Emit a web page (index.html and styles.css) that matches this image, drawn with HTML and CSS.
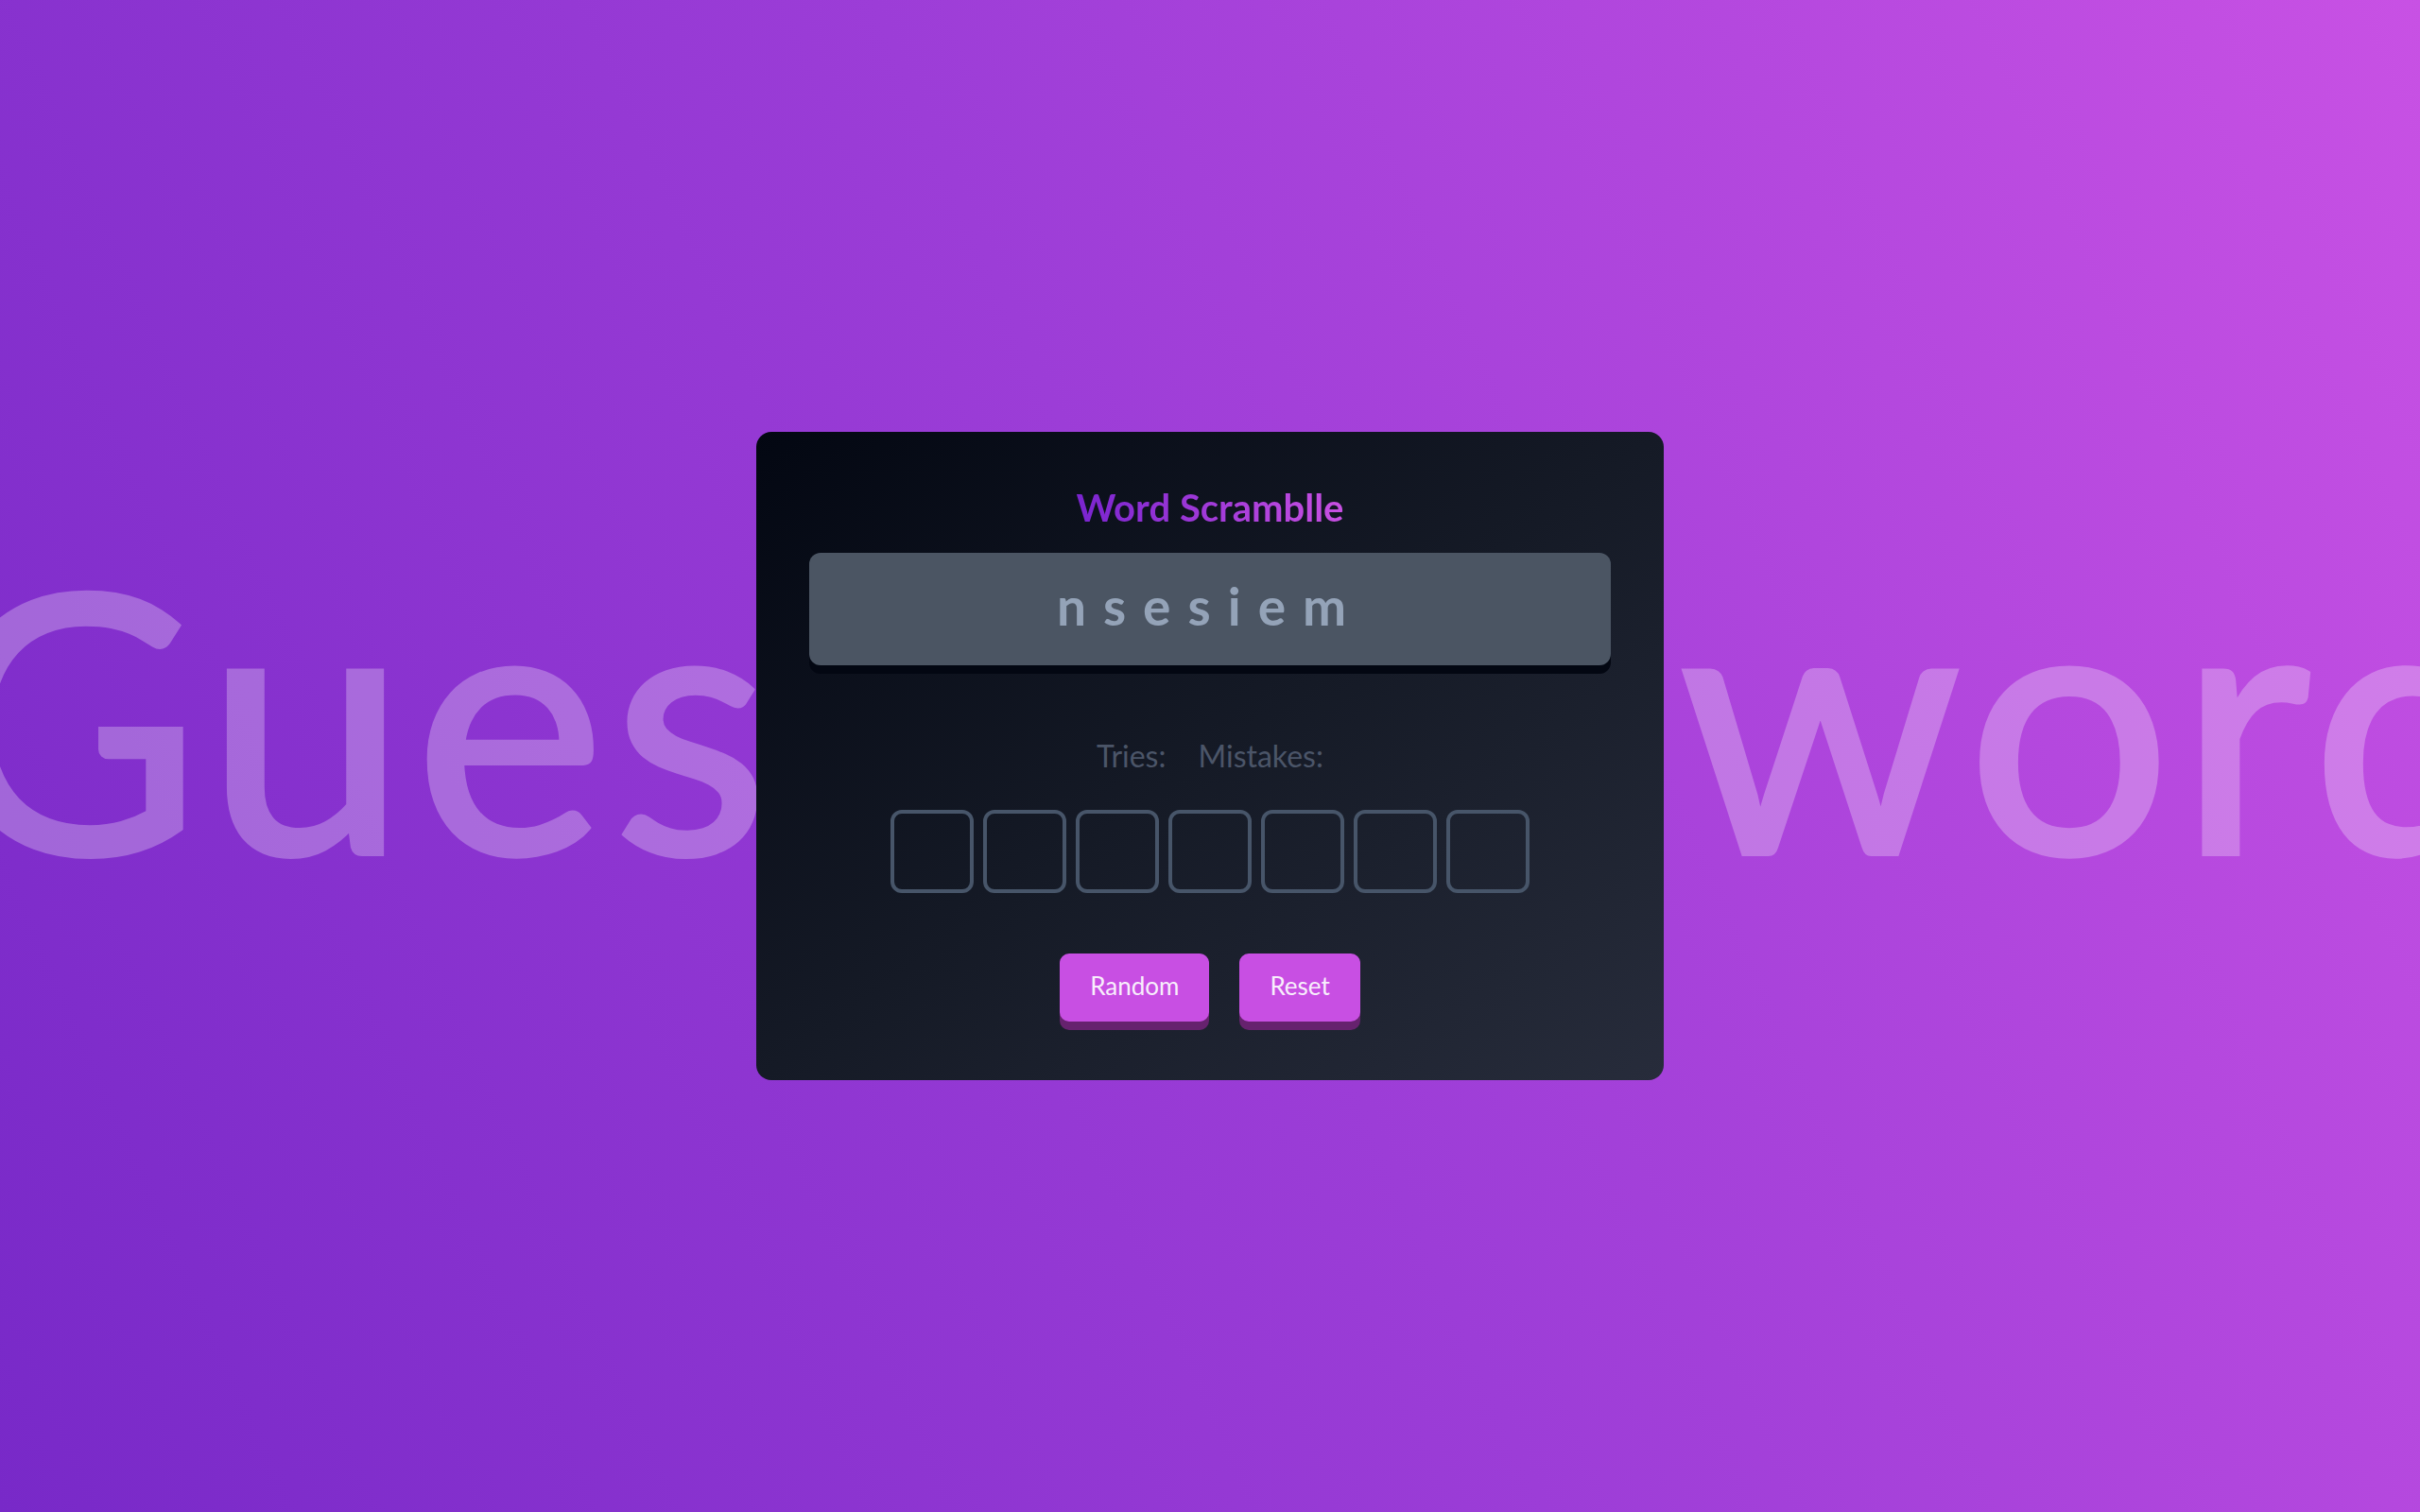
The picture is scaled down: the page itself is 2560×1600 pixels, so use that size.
FILE: index.html
```html
<!DOCTYPE html>
<html lang="en">
<head>
<meta charset="utf-8">
<title>Word Scramblle</title>
<link rel="stylesheet" href="styles.css">
</head>
<body>
<div class="backdrop" aria-hidden="true"><span class="backdrop-text">Guess the word</span></div>
<main class="stage">
  <section class="card">
    <h1 class="title">Word Scramblle</h1>
    <div class="scramble">nsesiem</div>
    <div class="stats">
      <span class="stat">Tries:</span>
      <span class="stat">Mistakes:</span>
    </div>
    <div class="slots">
      <div class="slot"></div>
      <div class="slot"></div>
      <div class="slot"></div>
      <div class="slot"></div>
      <div class="slot"></div>
      <div class="slot"></div>
      <div class="slot"></div>
    </div>
    <div class="actions">
      <button class="btn" type="button">Random</button>
      <button class="btn" type="button">Reset</button>
    </div>
  </section>
</main>
</body>
</html>
```
FILE: styles.css
```css
* { box-sizing: border-box; }
html, body { margin: 0; padding: 0; }
body {
  width: 100vw;
  height: 100vh;
  overflow: hidden;
  position: relative;
  font-family: Lato, "Noto Sans", sans-serif;
  background: linear-gradient(66deg, #7829c8 0%, #9c3dd7 50%, #c851e4 100%);
}
.backdrop {
  position: absolute;
  inset: 0;
  display: flex;
  align-items: center;
  justify-content: center;
  pointer-events: none;
  overflow: hidden;
}
.backdrop-text {
  font-size: 380px;
  line-height: 1;
  font-weight: 400;
  letter-spacing: 9px;
  white-space: nowrap;
  color: #fff;
  -webkit-text-stroke: 6px #fff;
  opacity: 0.27;
  margin-bottom: 88px;
  margin-left: 42px;
}
.stage {
  position: relative;
  height: 100vh;
  display: flex;
  align-items: center;
  justify-content: center;
}
.card {
  width: 960px;
  padding: 60px 56px 62px;
  border-radius: 16px;
  background: linear-gradient(to bottom right, #030712 0%, #151a26 50%, #272c3b 100%);
  display: flex;
  flex-direction: column;
  align-items: stretch;
}
.title {
  margin: 0 auto;
  font-size: 40px;
  line-height: 40px;
  font-weight: 700;
  width: fit-content;
  background: linear-gradient(90deg, #7a24cf, #c850e2);
  -webkit-background-clip: text;
  background-clip: text;
  color: transparent;
}
.scramble {
  margin-top: 28px;
  height: 119px;
  border-radius: 12px;
  background: #4b5563;
  box-shadow: 0 9px 0 #030712;
  display: flex;
  align-items: center;
  justify-content: center;
  color: #94a3b8;
  font-size: 55px;
  line-height: 1;
  font-weight: 700;
  letter-spacing: 18px;
  padding-bottom: 6px;
}
.stats {
  margin-top: 79px;
  display: flex;
  justify-content: center;
  gap: 34px;
  font-size: 32px;
  line-height: 33px;
  color: #4b5568;
}
.slots {
  margin-top: 41px;
  display: flex;
  justify-content: center;
  gap: 10px;
}
.slot {
  width: 88px;
  height: 88px;
  border: 4px solid #475569;
  border-radius: 12px;
}
.actions {
  margin-top: 64px;
  display: flex;
  justify-content: center;
  gap: 32px;
}
.btn {
  height: 72px;
  padding: 0 32px 4px;
  border: none;
  border-radius: 10px;
  background: #c84fe3;
  box-shadow: 0 9px 0 #66226e;
  color: #f8eefc;
  font-family: inherit;
  font-size: 26px;
  line-height: 1;
  font-weight: 400;
  cursor: pointer;
}
```
